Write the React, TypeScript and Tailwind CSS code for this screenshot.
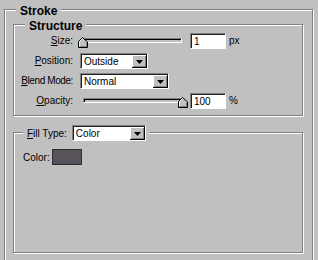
import React from "react";

function Acc({ c, rest }: { c: string; rest: string }) {
    return (
        <span className="whitespace-nowrap">
            <span className="underline underline-offset-[1px]">{c}</span>
            {rest}
        </span>
    );
}

function Dropdown({ value, width }: { value: string; width: string }) {
    return (
        <div className={`h-[16px] ${width} border border-t-[#808080] border-l-[#808080] border-b-white border-r-white`}>
            <div className="flex h-full border-t border-l border-t-[#202020] border-l-[#202020] bg-white">
                <div className="flex-1 pl-[2px] text-[10px] leading-[13px] text-black">{value}</div>
                <div className="flex w-[15px] items-center justify-center bg-[#c0c0c0] shadow-[inset_-1px_-1px_0_#000,inset_1px_1px_0_#fff,inset_-2px_-2px_0_#808080]">
                    <svg width="7" height="4" viewBox="0 0 7 4">
                        <polygon points="0,0 7,0 3.5,4" fill="#000" />
                    </svg>
                </div>
            </div>
        </div>
    );
}

function NumBox({ value }: { value: string }) {
    return (
        <div className="h-[16px] w-[36px] border border-t-[#808080] border-l-[#808080] border-b-white border-r-white">
            <div className="h-full border-t border-l border-t-[#202020] border-l-[#202020] bg-white pl-[2px] text-[10px] leading-[13px]">
                {value}
            </div>
        </div>
    );
}

function Slider({ atEnd }: { atEnd?: boolean }) {
    return (
        <div className="relative h-[16px] w-[110px]">
            <div className="ml-[3px] mt-[5px] h-[5px] w-[99px] border border-t-[#808080] border-l-[#808080] border-b-white border-r-white">
                <div className="h-full border-t border-l border-t-[#000] border-l-[#000] bg-[#c0c0c0]" />
            </div>
            <svg
                className={`absolute top-[4px] ${atEnd ? "left-[98px]" : "left-[-2px]"}`}
                width="10"
                height="11"
                viewBox="0 0 10 11"
            >
                <polygon points="0.5,4.5 4.5,0.5 9.5,5 9.5,10.5 0.5,10.5" fill="#c0c0c0" />
                <polyline points="1.5,9.5 1.5,4.5 4.5,1.5" fill="none" stroke="#fff" />
                <polyline points="4.5,0.5 9.5,5 9.5,10.5 0.5,10.5 0.5,4.5 4.5,0.5" fill="none" stroke="#000" />
                <polyline points="8.5,5.5 8.5,9.5 1.5,9.5" fill="none" stroke="#808080" />
            </svg>
        </div>
    );
}

function Label({ children }: { children: React.ReactNode }) {
    return <div className="text-right text-[10px] leading-[16px]">{children}</div>;
}

export default function App() {
    const etched =
        "relative border border-[#808080] shadow-[inset_1px_1px_0_#fff,1px_1px_0_#fff]";
    return (
        <div className="h-[260px] w-[318px] overflow-hidden bg-[#c0c0c0] font-['Liberation_Sans',Arial,sans-serif] text-black">
            <div className={`${etched} ml-[4px] mt-[9px] h-[270px] w-[309px] pl-[8px] pt-[14px]`}>
                <span className="absolute -top-[6px] left-[11px] bg-[#c0c0c0] px-[4px] text-[12px] font-bold leading-[14px]">
                    Stroke
                </span>

                {/* Structure */}
                <div className={`${etched} h-[92px] w-[290px]`}>
                    <span className="absolute -top-[6px] left-[11px] bg-[#c0c0c0] px-[4px] text-[12px] font-bold leading-[14px]">
                        Structure
                    </span>
                    <div className="grid grid-cols-[59px_auto] gap-x-[7px] gap-y-[4px] pt-[8px] text-[10px]">
                        <Label><Acc c="S" rest="ize:" /></Label>
                        <div className="flex items-center">
                            <Slider />
                            <NumBox value="1" />
                            <span className="ml-[3px] leading-[16px]">px</span>
                        </div>

                        <Label><Acc c="P" rest="osition:" /></Label>
                        <Dropdown value="Outside" width="w-[68px]" />

                        <Label>
                            <span className="tracking-[-0.4px]"><Acc c="B" rest="lend Mode:" /></span>
                        </Label>
                        <Dropdown value="Normal" width="w-[89px]" />

                        <Label><Acc c="O" rest="pacity:" /></Label>
                        <div className="flex items-center">
                            <Slider atEnd />
                            <NumBox value="100" />
                            <span className="ml-[3px] leading-[16px]">%</span>
                        </div>
                    </div>
                </div>

                {/* Fill */}
                <div className={`${etched} mt-[16px] h-[121px] w-[290px] pl-[9px] pt-[16px]`}>
                    <div className="absolute -top-[8px] left-[9px] flex items-center gap-[5px] bg-[#c0c0c0] px-[4px] text-[10px]">
                        <Acc c="F" rest="ill Type:" />
                        <Dropdown value="Color" width="w-[74px]" />
                    </div>
                    <div className="flex items-center gap-[2px] text-[10px]">
                        <span>Color:</span>
                        <div className="h-[16px] w-[30px] border border-[#303030] bg-[#58535b]" />
                    </div>
                </div>
            </div>
        </div>
    );
}
